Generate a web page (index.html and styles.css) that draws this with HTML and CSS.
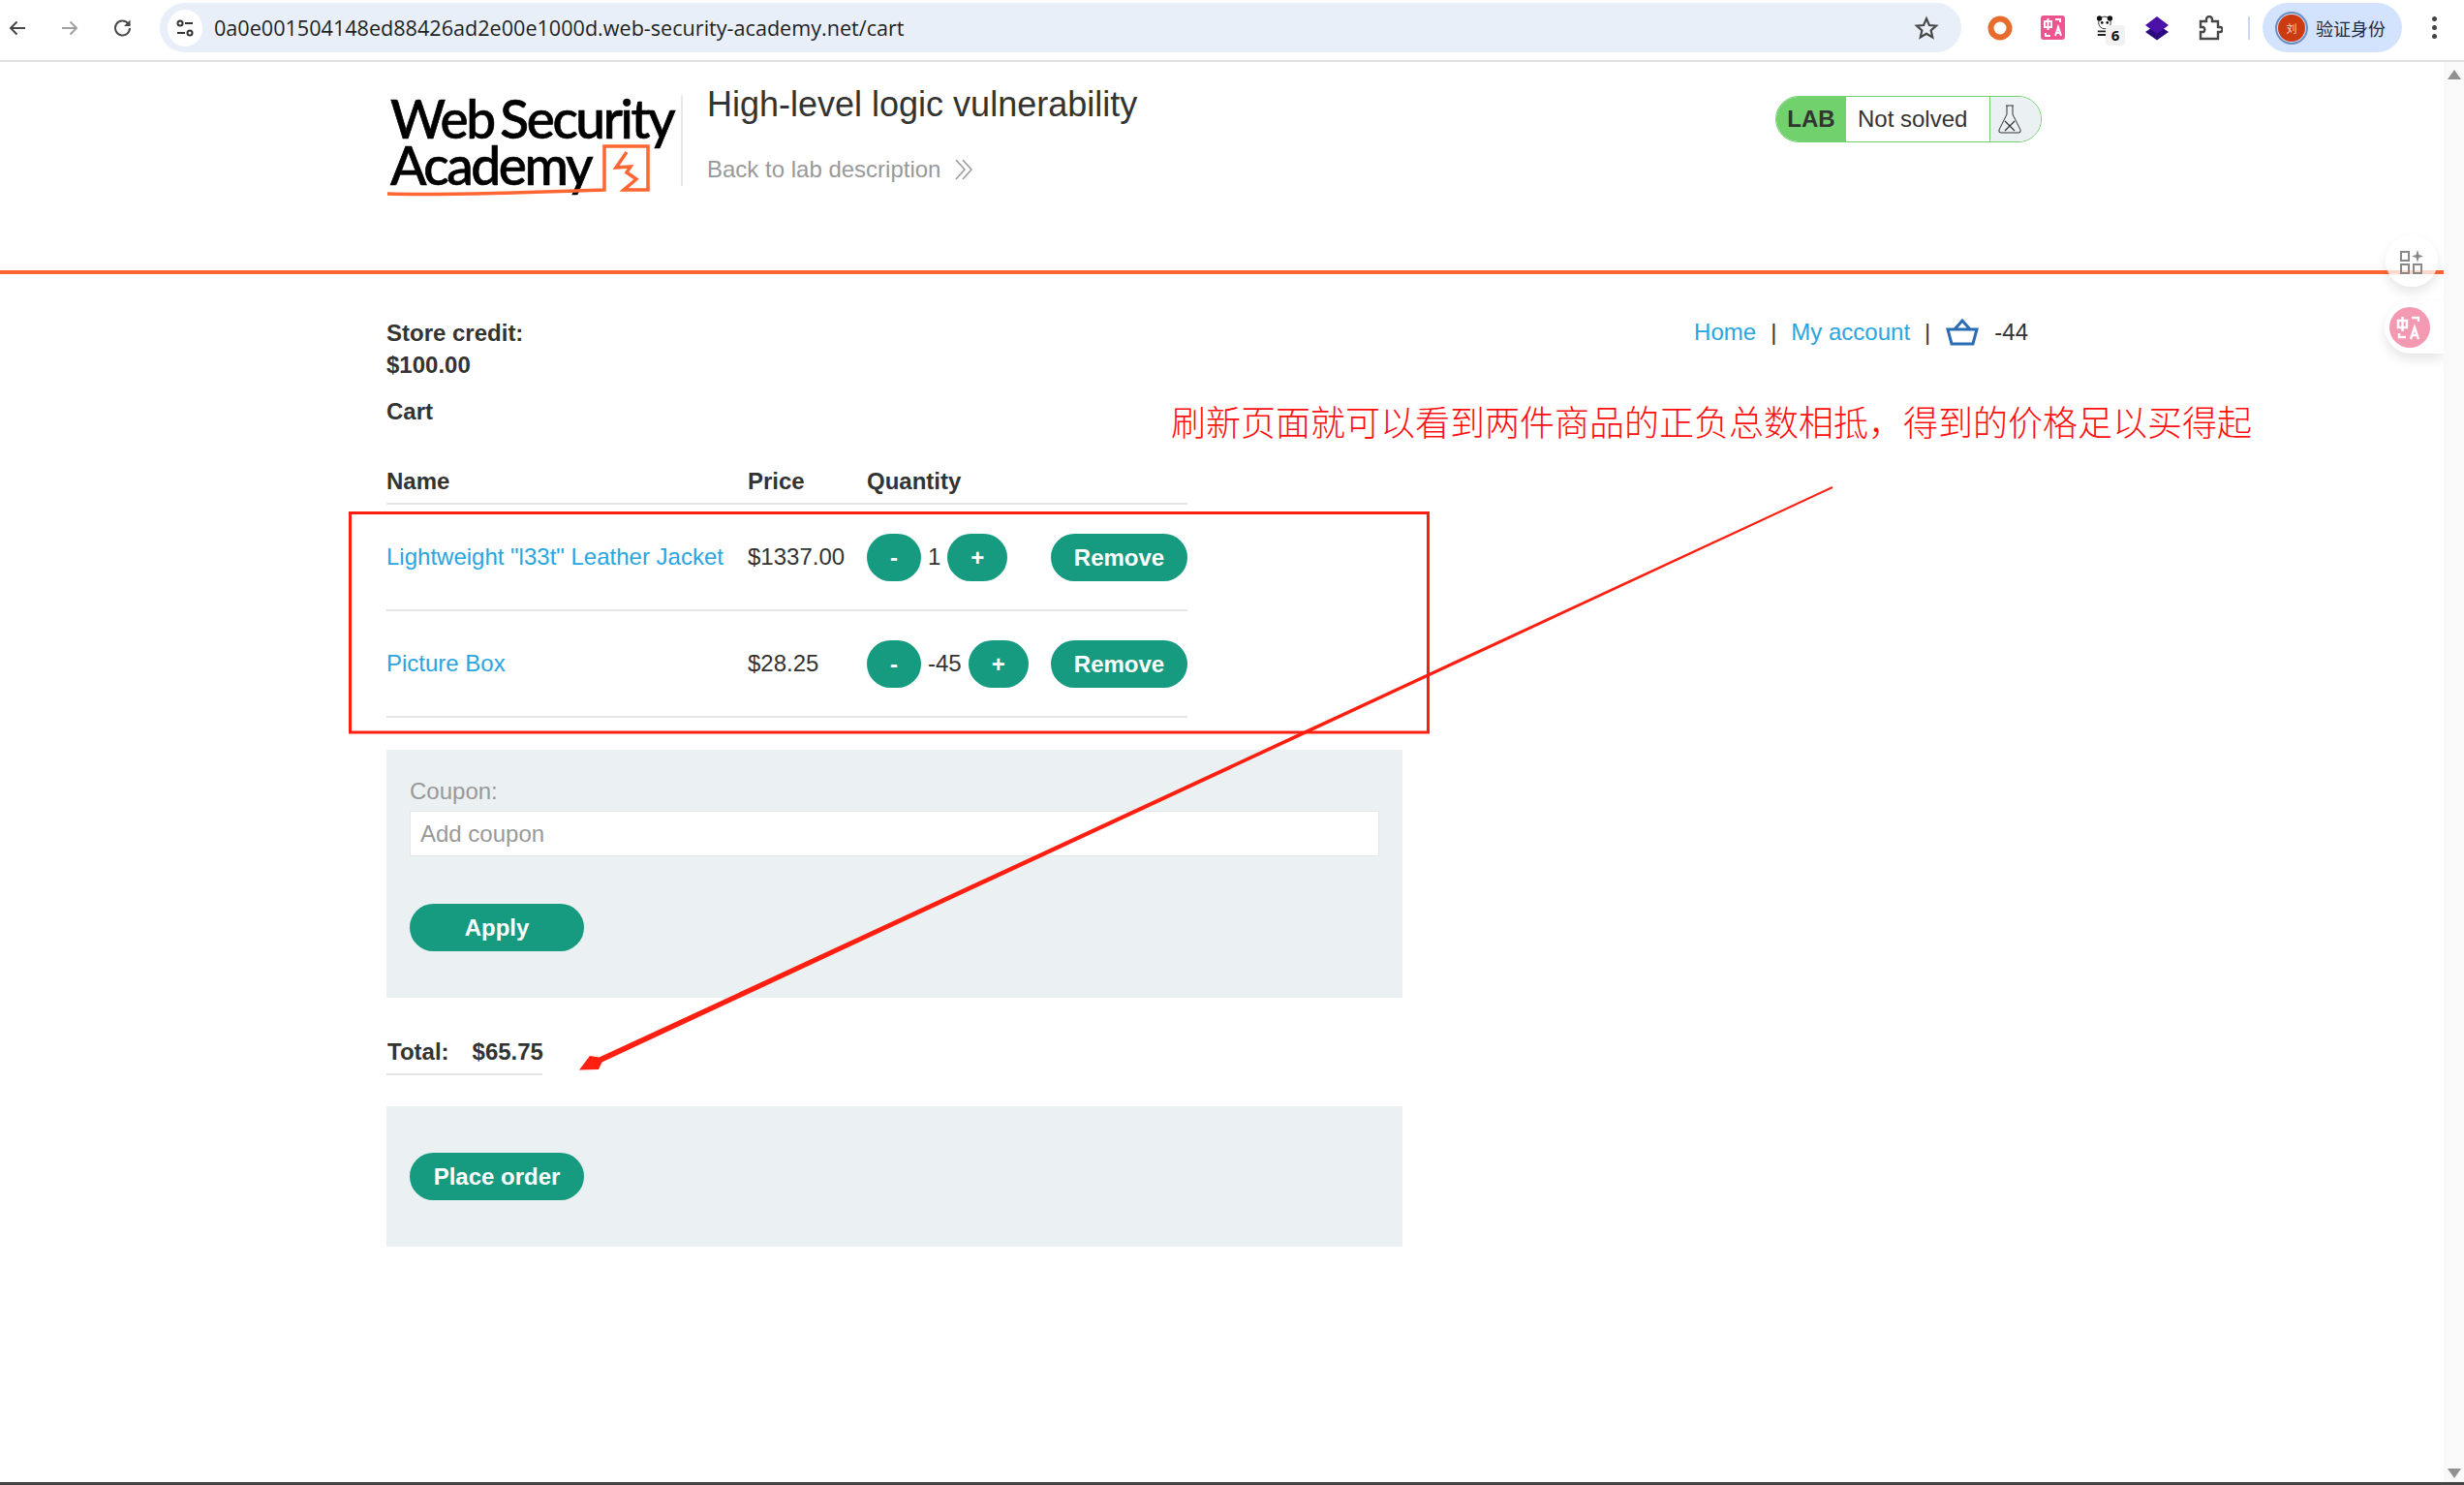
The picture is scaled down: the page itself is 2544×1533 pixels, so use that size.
FILE: index.html
```html
<!DOCTYPE html>
<html lang="en">
<head>
    <meta charset="UTF-8">
    <meta name="viewport" content="width=device-width, initial-scale=1.0">
    <title>High-level logic vulnerability</title>
    <link rel="stylesheet" href="styles.css">
</head>
<body>
    <!-- Browser toolbar -->
    <div class="toolbar">
        <div class="nav-icons">
            <svg class="tool-icon" width="20" height="20" viewBox="0 0 20 20"><path d="M18 10H3M9.5 3.5 3 10l6.5 6.500" fill="none" stroke="#474747" stroke-width="2"/></svg>
            <svg class="tool-icon" width="20" height="20" viewBox="0 0 20 20"><path d="M2 10h15M10.500 3.500 17 10l-6.500 6.500" fill="none" stroke="#a0a0a0" stroke-width="2"/></svg>
            <svg class="tool-icon" width="22" height="22" viewBox="0 0 22 22"><path d="M18 11a7.500 7.500 0 1 1-2.300-5.400L18 8" fill="none" stroke="#474747" stroke-width="2"/><path d="M18.500 2.500v6.500H12z" fill="#474747"/></svg>
        </div>
        <div class="address-bar">
            <span class="site-info">
                <svg width="20" height="20" viewBox="0 0 20 20"><g fill="none" stroke="#333" stroke-width="2"><circle cx="5" cy="5" r="2.500"/><path d="M10 5h8M2 15h8"/><circle cx="15" cy="15" r="2.500"/></g></svg>
            </span>
            <span class="url">0a0e001504148ed88426ad2e00e1000d.web-security-academy.net/cart</span>
            <svg class="star" width="26" height="26" viewBox="0 0 24 24"><path d="m12 3 2.700 6.200 6.600.6-5 4.400 1.500 6.600L12 17.300l-5.800 3.500 1.500-6.600-5-4.400 6.600-.6z" fill="none" stroke="#474747" stroke-width="2"/></svg>
        </div>
        <div class="extensions">
            <svg width="26" height="26" viewBox="0 0 26 26"><circle cx="13" cy="13" r="9.500" fill="none" stroke="#e86c2e" stroke-width="6"/></svg>
            <span class="ext-translate">
                <svg width="25" height="25" viewBox="0 0 25 25"><rect width="25" height="25" rx="3" fill="#ee5590"/><g fill="none" stroke="#fff" stroke-width="2"><path d="M4 6h7v6H4zM7.500 3v12M15 4h5v3M5 18v3h5M15 21l3-9 3 9M16 18h4"/></g></svg>
            </span>
            <span class="ext-panda">
                <svg width="18" height="22" viewBox="0 0 20 24"><circle cx="10" cy="8" r="7" fill="#fff" stroke="#222" stroke-width="1"/><circle cx="4" cy="3" r="3" fill="#111"/><circle cx="16" cy="3" r="3" fill="#111"/><circle cx="7" cy="8" r="1.500" fill="#111"/><circle cx="13" cy="8" r="1.500" fill="#111"/><path d="M2 17h16v2H2zM2 21h10v2H2z" fill="#222"/></svg>
                <span class="ext-badge">6</span>
            </span>
            <svg width="26" height="26" viewBox="0 0 26 26"><path d="m13 9 12 8-12 8.500L1 17z" fill="#2b0a7e"/><path d="M13 1 25 10 13 19 1 10z" fill="#4b10a8"/></svg>
            <svg width="26" height="26" viewBox="0 0 26 26"><path d="M3 6h6V4a3 3 0 0 1 6 0v2h6v6h2a2 2 0 0 1 0 5h-2v7H3v-7h3a3 3 0 0 0 0-5H3z" fill="none" stroke="#474747" stroke-width="2.400"/></svg>
        </div>
        <span class="toolbar-sep"></span>
        <div class="profile">
            <span class="avatar">刘</span>
            <span class="profile-name">验证身份</span>
        </div>
        <div class="menu-dots"><i></i><i></i><i></i></div>
    </div>

    <div class="viewport">
        <div class="page">
            <header class="lab-header">
                <div class="inner">
                    <div class="logo">
                        <div class="logo-text">Web Security<br>Academy</div>
                        <svg class="logo-mark" width="306" height="110" viewBox="0 0 306 110"><path d="M1 102c70 2 150-2 224-4V53h45v45h-25l13-11-10-7 4-6-15 1 11-16" fill="none" stroke="#ff6633" stroke-width="3.500"/></svg>
                    </div>
                    <div class="title-block">
                        <h2 class="lab-title">High-level logic vulnerability</h2>
                        <a class="back-link">Back to lab description
                            <svg width="20" height="22" viewBox="0 0 20 22"><path d="m2 1 9 10-9 10M9 1l9 10-9 10" fill="none" stroke="#999" stroke-width="1.500"/></svg>
                        </a>
                    </div>
                    <div class="lab-status">
                        <span class="lab-tag">LAB</span>
                        <span class="lab-state">Not solved</span>
                        <span class="lab-flask">
                            <svg width="24" height="30" viewBox="0 0 24 30"><path d="M8 1h8M9 1v9L1 26q-1 3 2 3h18q3 0 2-3l-8-16V1" fill="none" stroke="#333" stroke-width="1"/><path d="m7 17 10 10M17 17 7 27" fill="none" stroke="#333" stroke-width="1.200"/></svg>
                        </span>
                    </div>
                </div>
            </header>

            <section class="content">
                <div class="top-row">
                    <p class="credit">Store credit:<br>$100.00</p>
                    <nav class="top-links">
                        <a>Home</a><span class="pipe">|</span><a>My account</a><span class="pipe">|</span>
                        <svg class="basket" width="34" height="28" viewBox="0 0 34 28"><path d="M2 11h30l-4 15H6zM9 11l8-9 8 9" fill="none" stroke="#2a6db5" stroke-width="3"/></svg>
                        <span class="cart-count">-44</span>
                    </nav>
                </div>
                <p class="cart-title">Cart</p>

                <table class="cart-table">
                    <thead>
                        <tr><th class="col-name">Name</th><th class="col-price">Price</th><th class="col-qty">Quantity</th><th class="col-remove"></th></tr>
                    </thead>
                    <tbody>
                        <tr>
                            <td><a>Lightweight "l33t" Leather Jacket</a></td>
                            <td>$1337.00</td>
                            <td><div class="qty"><button class="btn btn-minus">-</button><span>1</span><button class="btn btn-plus">+</button></div></td>
                            <td><button class="btn btn-remove">Remove</button></td>
                        </tr>
                        <tr>
                            <td><a>Picture Box</a></td>
                            <td>$28.25</td>
                            <td><div class="qty"><button class="btn btn-minus">-</button><span>-45</span><button class="btn btn-plus">+</button></div></td>
                            <td><button class="btn btn-remove">Remove</button></td>
                        </tr>
                    </tbody>
                </table>

                <form class="panel coupon-panel">
                    <label for="coupon">Coupon:</label>
                    <input type="text" id="coupon" placeholder="Add coupon">
                    <button type="button" class="btn btn-wide">Apply</button>
                </form>

                <div class="total"><span>Total:</span><span>$65.75</span></div>

                <div class="panel order-panel">
                    <button type="button" class="btn btn-wide">Place order</button>
                </div>
            </section>
        </div>

        <!-- Floating extension widgets -->
        <div class="float-btn float-apps">
            <svg width="26" height="26" viewBox="0 0 26 26"><g fill="none" stroke="#888" stroke-width="2"><rect x="2" y="3" width="8" height="9"/><rect x="2" y="16" width="8" height="9"/><rect x="15" y="16" width="8" height="9"/></g><path d="m19 1 1.500 5 4.500 1.500-4.500 1.500-1.500 5-1.500-5L13 7.500 17.500 6z" fill="#888"/></svg>
        </div>
        <div class="float-btn float-translate">
            <span class="pink-dot">
                <svg width="28" height="28" viewBox="0 0 28 28"><g fill="none" stroke="#fff" stroke-width="2.400"><path d="M2 7h9v7H2zM6.500 3v15M16 4h7v4M3 20v4h7M15 26l4-12 4 12M16.500 22h5"/></g></svg>
            </span>
        </div>

        <!-- Annotation drawn over the page -->
        <svg class="markup" width="2523" height="1466" viewBox="0 64 2523 1466">
            <rect x="361.500" y="529.500" width="1113" height="226.500" fill="none" stroke="#ff1f10" stroke-width="3"/>
            <path d="M1891.600 502.100 1892.400 503.900 621.500 1096.500 618 1104 598 1104.500 609 1090 618.500 1091.500z" fill="#ff1f10"/>
        </svg>
        <div class="note">刷新页面就可以看到两件商品的正负总数相抵，得到的价格足以买得起</div>

        <div class="scrollbar">
            <span class="arrow-up"></span>
            <span class="arrow-down"></span>
        </div>
    </div>
    <div class="window-edge"></div>
</body>
</html>
```

FILE: styles.css
```css
* {
    box-sizing: border-box;
}

html, body {
    height: 100%;
}

body {
    margin: 0;
    display: flex;
    flex-direction: column;
    overflow: hidden;
    background-color: #fff;
    color: #333332;
    font-family: "Liberation Sans", Arial, sans-serif;
    font-size: 24px;
    line-height: 32px;
}

/* toolbar */
.toolbar {
    display: flex;
    align-items: center;
    flex: 0 0 64px;
    padding: 0 0 5px 8px;
    background-color: #fff;
    border-bottom: 2px solid #e2e2e2;
}

.nav-icons {
    display: flex;
    align-items: center;
    gap: 34px;
    width: 157px;
}

.address-bar {
    display: flex;
    align-items: center;
    width: 1860px;
    height: 51px;
    padding-left: 8px;
    padding-right: 23px;
    background-color: #e9eff9;
    border-radius: 26px;
}

.site-info {
    display: flex;
    align-items: center;
    justify-content: center;
    width: 36px;
    height: 38px;
    margin-right: 12px;
    background-color: #fff;
    border-radius: 50%;
}

.url {
    flex: 1;
    color: #1f1f1f;
    font-family: "Open Sans", sans-serif;
    font-size: 21.600px;
    line-height: 28px;
}

.extensions {
    display: flex;
    align-items: center;
    gap: 29px;
    margin-left: 27px;
}

.ext-translate {
    display: flex;
}

.ext-panda {
    position: relative;
    display: flex;
    width: 24px;
    height: 26px;
    padding-left: 3px;
}

.ext-badge {
    position: absolute;
    left: 13px;
    top: 10px;
    width: 20px;
    height: 21px;
    background-color: #f2f2f2;
    border-radius: 4px;
    color: #111;
    font-family: "Open Sans", sans-serif;
    font-size: 15px;
    font-weight: 700;
    line-height: 21px;
    text-align: center;
}

.toolbar-sep {
    width: 2px;
    height: 24px;
    margin-left: 26px;
    background-color: #c8d8f4;
}

.profile {
    display: flex;
    align-items: center;
    width: 144px;
    height: 51px;
    margin-left: 13px;
    padding-left: 16px;
    background-color: #d3e3fd;
    border-radius: 26px;
}

.avatar {
    width: 28px;
    height: 28px;
    background-color: #cc3a10;
    border-radius: 50%;
    box-shadow: 0 0 0 1px #d3e3fd, 0 0 0 3px #6b8cc0;
    color: #f5d5c8;
    font-family: "Noto Sans CJK SC", sans-serif;
    font-size: 11px;
    line-height: 28px;
    text-align: center;
}

.profile-name {
    margin-left: 11px;
    color: #1f2a44;
    font-family: "Noto Sans CJK SC", sans-serif;
    font-size: 18px;
    line-height: 24px;
}

.menu-dots {
    display: flex;
    flex-direction: column;
    gap: 4px;
    margin-left: 31px;
}

.menu-dots i {
    display: block;
    width: 5px;
    height: 5px;
    background-color: #444;
    border-radius: 50%;
}

/* page */
.viewport {
    position: relative;
    flex: 1;
    display: flex;
    overflow: hidden;
}

.page {
    flex: 1;
}

.lab-header {
    height: 219px;
    border-bottom: 4px solid #ff6633;
}

.inner {
    display: flex;
    align-items: flex-start;
    width: 1709px;
    margin-left: 399px;
}

.logo {
    position: relative;
    width: 306px;
    height: 94px;
    margin-top: 34px;
    padding-left: 4px;
    border-right: 2px solid #e8e8e8;
}

.logo-text {
    color: #000;
    font-family: Lato, sans-serif;
    font-size: 55px;
    font-weight: 500;
    letter-spacing: -2.400px;
    word-spacing: -5px;
    line-height: 48px;
    -webkit-text-stroke: 0.7px #000;
}

.logo-mark {
    position: absolute;
    left: 0;
    top: 0;
    overflow: visible;
}

.title-block {
    margin-left: 25px;
}

.lab-title {
    margin: 0;
    padding-top: 22px;
    font-size: 36px;
    font-weight: 400;
    line-height: 44px;
}

.back-link {
    display: flex;
    align-items: center;
    gap: 14px;
    margin-top: 29px;
    color: #999;
}

.lab-status {
    display: flex;
    align-items: stretch;
    width: 275px;
    height: 48px;
    margin-top: 35px;
    margin-left: auto;
    overflow: hidden;
    border: 1px solid #70d16d;
    border-radius: 24px;
    line-height: 46px;
}

.lab-tag {
    width: 72px;
    background-color: #70d16d;
    font-weight: 700;
    text-align: center;
}

.lab-state {
    width: 148px;
    padding-left: 12px;
    background-color: #fff;
}

.lab-flask {
    flex: 1;
    display: flex;
    align-items: center;
    justify-content: center;
    padding-right: 12px;
    background-color: #ebf0f2;
    border-left: 1px solid #70d16d;
}

.content {
    margin-left: 399px;
    padding-top: 44px;
    width: 1709px;
}

.top-row {
    display: flex;
    justify-content: space-between;
    align-items: flex-start;
}

.credit, .cart-title {
    margin: 0;
    font-weight: 700;
}

.credit {
    line-height: 33px;
}

.cart-title {
    margin-top: 16px;
}

.top-links {
    display: flex;
    align-items: center;
    height: 32px;
    padding-right: 14px;
}

a {
    color: #29a5e0;
    text-decoration: none;
}

.pipe {
    margin: 0 15px;
    color: #4a3320;
}

.basket {
    margin-left: 1px;
    margin-right: 16px;
}

.cart-table {
    width: 827px;
    margin-top: 40px;
    border-collapse: collapse;
    table-layout: fixed;
}

.cart-table th {
    height: 31px;
    padding: 0 0 6px;
    border-bottom: 2px solid #e6e6e6;
    font-weight: 700;
    text-align: left;
}

.cart-table td {
    height: 110px;
    padding: 0;
    border-bottom: 2px solid #e6e6e6;
}

.col-name { width: 373px; }
.col-price { width: 123px; }
.col-qty { width: 190px; }
.col-remove { width: 141px; }

.qty {
    display: flex;
    align-items: center;
}

.qty span {
    margin: 0 7px;
}

.btn {
    height: 49px;
    padding: 0;
    background-color: #179b80;
    border: none;
    border-radius: 25px;
    color: #fff;
    cursor: pointer;
    font-family: inherit;
    font-size: 24px;
    font-weight: 700;
    line-height: 49px;
}

.btn-minus { width: 56px; }
.btn-plus { width: 62px; }
.btn-remove { display: block; width: 141px; }
.btn-wide { display: block; width: 180px; }

.panel {
    width: 1049px;
    padding: 0 24px;
    background-color: #ebf0f2;
}

.coupon-panel {
    margin-top: 33px;
    padding-top: 27px;
    padding-bottom: 48px;
}

.coupon-panel label {
    display: block;
    color: #999;
}

.coupon-panel input {
    display: block;
    width: 100%;
    height: 47px;
    margin: 4px 0 49px;
    padding: 0 10px;
    background-color: #fff;
    border: 1px solid #e6e6e6;
    color: #333;
    font-family: inherit;
    font-size: 24px;
}

.coupon-panel input::placeholder {
    color: #999;
    opacity: 1;
}

.total {
    display: flex;
    gap: 24px;
    width: 161px;
    margin-top: 40px;
    padding: 0 0 6px 1px;
    border-bottom: 2px solid #e6e6e6;
    font-weight: 700;
}

.order-panel {
    margin-top: 32px;
    padding-top: 48px;
    padding-bottom: 48px;
}

/* things lying over the page */
.markup {
    position: absolute;
    left: 0;
    top: 0;
    pointer-events: none;
}

.note {
    position: absolute;
    left: 1209px;
    top: 346px;
    color: #ff0f0f;
    font-family: "Noto Sans CJK SC", sans-serif;
    font-size: 36px;
    font-weight: 300;
    line-height: 48px;
    white-space: nowrap;
}

.float-btn {
    position: absolute;
    display: flex;
    align-items: center;
    justify-content: center;
    background-color: #fff;
    box-shadow: 0 6px 12px rgba(0, 0, 0, 0.1);
}

.float-apps {
    left: 2463px;
    top: 179px;
    width: 54px;
    height: 53px;
    background-color: rgba(255, 255, 255, 0.75);
    border-radius: 27px;
}

.float-translate {
    left: 2462px;
    top: 247px;
    width: 61px;
    height: 54px;
    padding-right: 9px;
    border-radius: 27px 0 0 27px;
}

.pink-dot {
    display: flex;
    align-items: center;
    justify-content: center;
    width: 42px;
    height: 42px;
    background-color: #f39ab2;
    border-radius: 50%;
}

.scrollbar {
    position: relative;
    flex: 0 0 21px;
    background-color: #f9f9f9;
}

.arrow-up, .arrow-down {
    position: absolute;
    left: 4px;
    width: 0;
    height: 0;
    border-left: 7px solid transparent;
    border-right: 7px solid transparent;
}

.arrow-up {
    top: 8px;
    border-bottom: 10px solid #909090;
}

.arrow-down {
    bottom: 4px;
    border-top: 10px solid #909090;
}

.window-edge {
    flex: 0 0 3px;
    background-color: #444;
}
```
